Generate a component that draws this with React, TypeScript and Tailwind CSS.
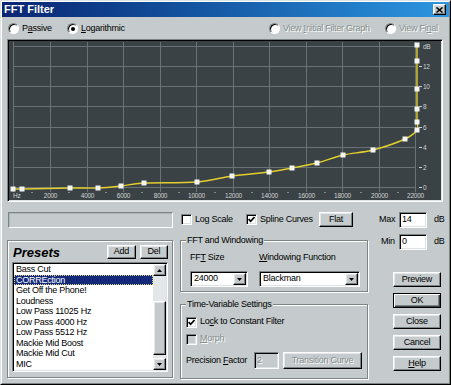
import React from 'react';
import clsx from 'clsx';

const raised =
  'border border-t-white border-l-white border-r-black border-b-black shadow-[inset_-1px_-1px_0_#7c8484,inset_1px_1px_0_#e4e8e8] bg-[#c5cbcc]';
const sunken =
  'border border-t-[#7c8484] border-l-[#7c8484] border-r-white border-b-white shadow-[inset_1px_1px_0_#000,inset_-1px_-1px_0_#dde2e2]';
const etched = 'border border-[#7c8484] shadow-[1px_1px_0_#fff,inset_1px_1px_0_#fff]';
const dimText = 'text-[#868e8e] [text-shadow:1px_1px_0_#fff]';

type Pt = [number, number];

// control points in page coords, graph svg sits at (9,41)
const points: Pt[] = [
  [13, 189], [22, 189], [70, 188], [98, 188], [121, 186], [144, 183], [197, 182],
  [232, 176], [269, 172], [292, 168], [317, 163], [343, 155], [373, 150], [405, 139],
  [417, 130], [417, 122], [417, 109], [417, 89], [417, 61], [417, 45],
];

const splinePath = (pts: Pt[]) => {
  const p = pts.map(([x, y]) => [x - 9, y - 41]);
  let d = `M${p[0][0]},${p[0][1]}`;
  for (let i = 0; i < p.length - 1; i++) {
    const p0 = p[i - 1] || p[i];
    const p1 = p[i];
    const p2 = p[i + 1];
    const p3 = p[i + 2] || p2;
    const c1x = p1[0] + (p2[0] - p0[0]) / 6;
    const c1y = p1[1] + (p2[1] - p0[1]) / 6;
    const c2x = p2[0] - (p3[0] - p1[0]) / 6;
    const c2y = p2[1] - (p3[1] - p1[1]) / 6;
    d += ` C${c1x},${c1y} ${c2x},${c2y} ${p2[0]},${p2[1]}`;
  }
  return d;
};

const freqLabels = ['Hz', '2000', '4000', '6000', '8000', '10000', '12000', '14000', '16000', '18000', '20000', '22000'];
const dbLabels = ['0', '2', '4', '6', '8', '10', '12', 'dB'];

const Graph = () => {
  const vx = freqLabels.map((_, k) => Math.round(4.4 + 36.55 * k) + 0.5);
  const hy = dbLabels.map((_, j) => Math.round(146 - 20.14 * j) + 0.5);
  return (
    <svg width="432" height="159" className="block m-[1px]">
      <rect width="432" height="159" fill="#3b4245" />
      {vx.map((x) => (
        <line key={x} x1={x} x2={x} y1={1} y2={151} stroke="#697375" />
      ))}
      {hy.map((y) => (
        <line key={y} x1={4} x2={407} y1={y} y2={y} stroke="#697375" />
      ))}
      {vx.slice(0, 11).map((x) => (
        <rect key={'m' + x} x={x + 18} y={151} width={1} height={1} fill="#d0d6d6" />
      ))}
      <path d={splinePath(points)} fill="none" stroke="#e2cf2c" strokeWidth={1.4} />
      {points.map(([x, y], i) => (
        <rect key={i} x={x - 9 - 2.5} y={y - 41 - 2.5} width={5} height={5} fill="#f4f4f4" />
      ))}
      {freqLabels.map((t, k) => (
        <text
          key={t}
          x={k === 0 ? 4 : vx[k]}
          y={157}
          textAnchor={k === 0 ? 'start' : 'middle'}
          fontSize="6.5"
          fill="#cdd3d3"
          fontFamily="Liberation Sans, Arial, sans-serif"
        >
          {t}
        </text>
      ))}
      {dbLabels.map((t, j) => (
        <g key={t}>
          {t !== 'dB' && <line x1={410} x2={413} y1={hy[j]} y2={hy[j]} stroke="#cdd3d3" />}
          <text x={414} y={hy[j] + 2.4} fontSize="6.5" fill="#cdd3d3" fontFamily="Liberation Sans, Arial, sans-serif">
            {t}
          </text>
        </g>
      ))}
    </svg>
  );
};

const Radio = ({ checked, disabled, label, className }: { checked?: boolean; disabled?: boolean; label: React.ReactNode; className?: string }) => (
  <div className={clsx('flex items-center shrink-0', className)}>
    <span className="w-[11px] h-[11px] rounded-full bg-white border border-t-[#7c8484] border-l-[#7c8484] border-r-white border-b-white shadow-[inset_1px_1px_0_#000] flex items-center justify-center shrink-0">
      {checked && <span className="w-[4px] h-[4px] rounded-full bg-black" />}
    </span>
    <span className={clsx('ml-[3px]', disabled && dimText)}>{label}</span>
  </div>
);

const Check = ({ checked, disabled }: { checked?: boolean; disabled?: boolean }) => (
  <span className={clsx('w-[11px] h-[11px] flex items-center justify-center shrink-0', sunken, disabled ? 'bg-[#c5cbcc]' : 'bg-white')}>
    {checked && (
      <svg width="7" height="7" viewBox="0 0 7 7">
        <path d="M0.6 3.2 L2.6 5.3 L6.5 1" stroke="#000" strokeWidth="1.7" fill="none" />
      </svg>
    )}
  </span>
);

const Arrow = ({ up }: { up?: boolean }) => (
  <svg width="5" height="3" viewBox="0 0 5 3">
    <path d={up ? 'M0 3 L5 3 L2.5 0 Z' : 'M0 0 L5 0 L2.5 3 Z'} fill="#000" />
  </svg>
);

const Select = ({ value, className }: { value: string; className: string }) => (
  <div className={clsx('h-[16px] bg-white flex items-center', sunken, className)}>
    <span className="flex-1 pl-[3px]">{value}</span>
    <span className={clsx('w-[13px] h-[12px] mr-[1px] flex items-center justify-center', raised)}>
      <Arrow />
    </span>
  </div>
);

const Btn = ({ children, className }: { children: React.ReactNode; className?: string }) => (
  <div className={clsx('flex items-center justify-center', raised, className)}>{children}</div>
);

const presets = [
  'Bass Cut', 'CORREction', 'Get Off the Phone!', 'Loudness', 'Low Pass 11025 Hz', 'Low Pass 4000 Hz',
  'Low Pass 5512 Hz', 'Mackie Mid Boost', 'Mackie Mid Cut', 'MIC',
];

export default function App() {
  return (
    <div className="w-[451px] h-[385px] bg-[#c5cbcc] border border-t-[#dfe3e3] border-l-[#dfe3e3] border-r-black border-b-black font-['Liberation_Sans',Arial,sans-serif] text-[9px] tracking-[-0.25px] text-black overflow-hidden select-none">
      <div className="h-full border border-t-white border-l-white border-r-[#7c8484] border-b-[#7c8484] flex flex-col">
        {/* title bar */}
        <div className="h-[15px] flex items-center bg-linear-to-r from-[#0a2472] to-[#2e96e0] pl-[2px] pr-[3px]">
          <span className="text-[11px] font-bold text-white tracking-normal leading-none">FFT Filter</span>
          <Btn className="ml-auto w-[13px] h-[11px]">
            <svg width="7" height="6" viewBox="0 0 7 6">
              <path d="M0.5 0.5 L6.5 5.5 M6.5 0.5 L0.5 5.5" stroke="#000" strokeWidth="1.5" />
            </svg>
          </Btn>
        </div>

        {/* view mode radios */}
        <div className="h-[22px] flex items-center pl-[6px] pt-[1px]">
          <Radio className="w-[59px]" label={<>P<u>a</u>ssive</>} />
          <Radio className="w-[202px]" checked label={<><u>L</u>ogarithmic</>} />
          <Radio className="w-[116px]" disabled label={<>View <u>I</u>nitial Filter Graph</>} />
          <Radio disabled label={<>View Fi<u>n</u>al</>} />
        </div>

        {/* graph */}
        <div className={clsx('ml-[5px] w-[436px] h-[163px]', sunken)}>
          <Graph />
        </div>

        {/* graph options */}
        <div className="mt-[9px] h-[17px] flex items-center">
          <div className="ml-[6px] w-[165px] h-[16px] border border-t-[#7c8484] border-l-[#7c8484] border-r-white border-b-white shadow-[inset_1px_1px_0_#aeb5b6]" />
          <div className="ml-[8px] w-[65px] flex items-center">
            <Check />
            <span className="ml-[3px]">Log Scale</span>
          </div>
          <div className="w-[73px] flex items-center">
            <Check checked />
            <span className="ml-[3px]">Spline Curves</span>
          </div>
          <Btn className="w-[34px] h-[15px]">Flat</Btn>
          <span className="ml-[26px] w-[20px]">Max</span>
          <div className={clsx('w-[28px] h-[16px] bg-white flex items-center pl-[2px]', sunken)}>14</div>
          <span className="ml-[7px]">dB</span>
        </div>

        {/* lower section */}
        <div className="mt-[5px] flex items-start">
          {/* presets */}
          <div className={clsx('ml-[5px] mt-[7px] w-[166px] h-[138px] pt-[4px] px-[4px]', etched)}>
            <div className="h-[14px] flex items-center">
              <span className="ml-[1px] text-[13px] font-bold italic tracking-normal leading-none">Presets</span>
              <Btn className="ml-auto w-[29px] h-[14px]">Add</Btn>
              <Btn className="ml-[4px] w-[28px] h-[14px]">Del</Btn>
            </div>
            <div className={clsx('mt-[3px] w-[156px] h-[110px] bg-white flex p-[1px]', sunken)}>
              <div className="flex-1 overflow-hidden">
                {presets.map((p) => (
                  <div
                    key={p}
                    className={clsx(
                      'h-[10.5px] leading-[10.5px] pl-[2px] whitespace-nowrap',
                      p === 'CORREction' && 'bg-[#14297a] text-white outline outline-1 outline-dotted outline-offset-[-1px] outline-[#d8d480]'
                    )}
                  >
                    {p}
                  </div>
                ))}
              </div>
              <div className="w-[13px] flex flex-col bg-[#e3e7e7]">
                <Btn className="h-[12px]"><Arrow up /></Btn>
                <div className="flex-1 flex flex-col">
                  <div className="h-[25px]" />
                  <div className={clsx('h-[54px]', raised)} />
                </div>
                <Btn className="h-[12px]"><Arrow /></Btn>
              </div>
            </div>
          </div>

          {/* fft / time-variable */}
          <div className="ml-[7px] w-[188px] flex flex-col">
            <fieldset className={clsx('mt-[2px] px-[5px] pb-[4px]', etched)}>
              <legend className="px-[1px] leading-[11px] bg-[#c5cbcc]">FFT and Windowing</legend>
              <div className="flex pl-[4px]">
                <div className="w-[69px]">
                  <div className="mt-[6px] leading-[11px]">FF<u>T</u> Size</div>
                  <Select value="24000" className="mt-[8px] w-[58px]" />
                </div>
                <div>
                  <div className="mt-[6px] leading-[11px]"><u>W</u>indowing Function</div>
                  <Select value="Blackman" className="mt-[8px] w-[101px]" />
                </div>
              </div>
            </fieldset>
            <fieldset className={clsx('mt-[7px] px-[5px] pb-[9px]', etched)}>
              <legend className="px-[1px] leading-[11px] bg-[#c5cbcc]">Time-Variable Settings</legend>
              <div className="mt-[6px] h-[12px] flex items-center">
                <Check checked />
                <span className="ml-[3px]">Lo<u>c</u>k to Constant Filter</span>
              </div>
              <div className="mt-[5px] h-[12px] flex items-center">
                <Check disabled />
                <span className={clsx('ml-[3px]', dimText)}><u>M</u>orph</span>
              </div>
              <div className="mt-[7px] h-[17px] flex items-center">
                <span className="w-[68px]">Precision <u>F</u>actor</span>
                <div className={clsx('w-[25px] h-[17px] flex items-center pl-[2px]', sunken, dimText)}>2</div>
                <Btn className={clsx('ml-[4px] w-[79px] h-[17px]', dimText)}>Transition Curve</Btn>
              </div>
            </fieldset>
          </div>

          {/* right column */}
          <div className="w-[79px] flex flex-col">
            <div className="mt-[1px] h-[16px] flex items-center">
              <span className="ml-[13px] w-[18px]">Min</span>
              <div className={clsx('w-[28px] h-[16px] bg-white flex items-center pl-[2px]', sunken)}>0</div>
              <span className="ml-[7px]">dB</span>
            </div>
            <div className="mt-[22px] ml-[25px] flex flex-col gap-[6px]">
              <Btn className="w-[48px] h-[15px]">Preview</Btn>
              <div className="w-[48px] h-[15px] flex items-center justify-center border border-black shadow-[inset_1px_1px_0_#fff,inset_-1px_-1px_0_#3a3f40,inset_-2px_-2px_0_#7c8484]">OK</div>
              <Btn className="w-[48px] h-[15px]">Close</Btn>
              <Btn className="w-[48px] h-[15px]">Cancel</Btn>
              <Btn className="w-[48px] h-[15px]"><u>H</u>elp</Btn>
            </div>
          </div>
        </div>
      </div>
    </div>
  );
}
